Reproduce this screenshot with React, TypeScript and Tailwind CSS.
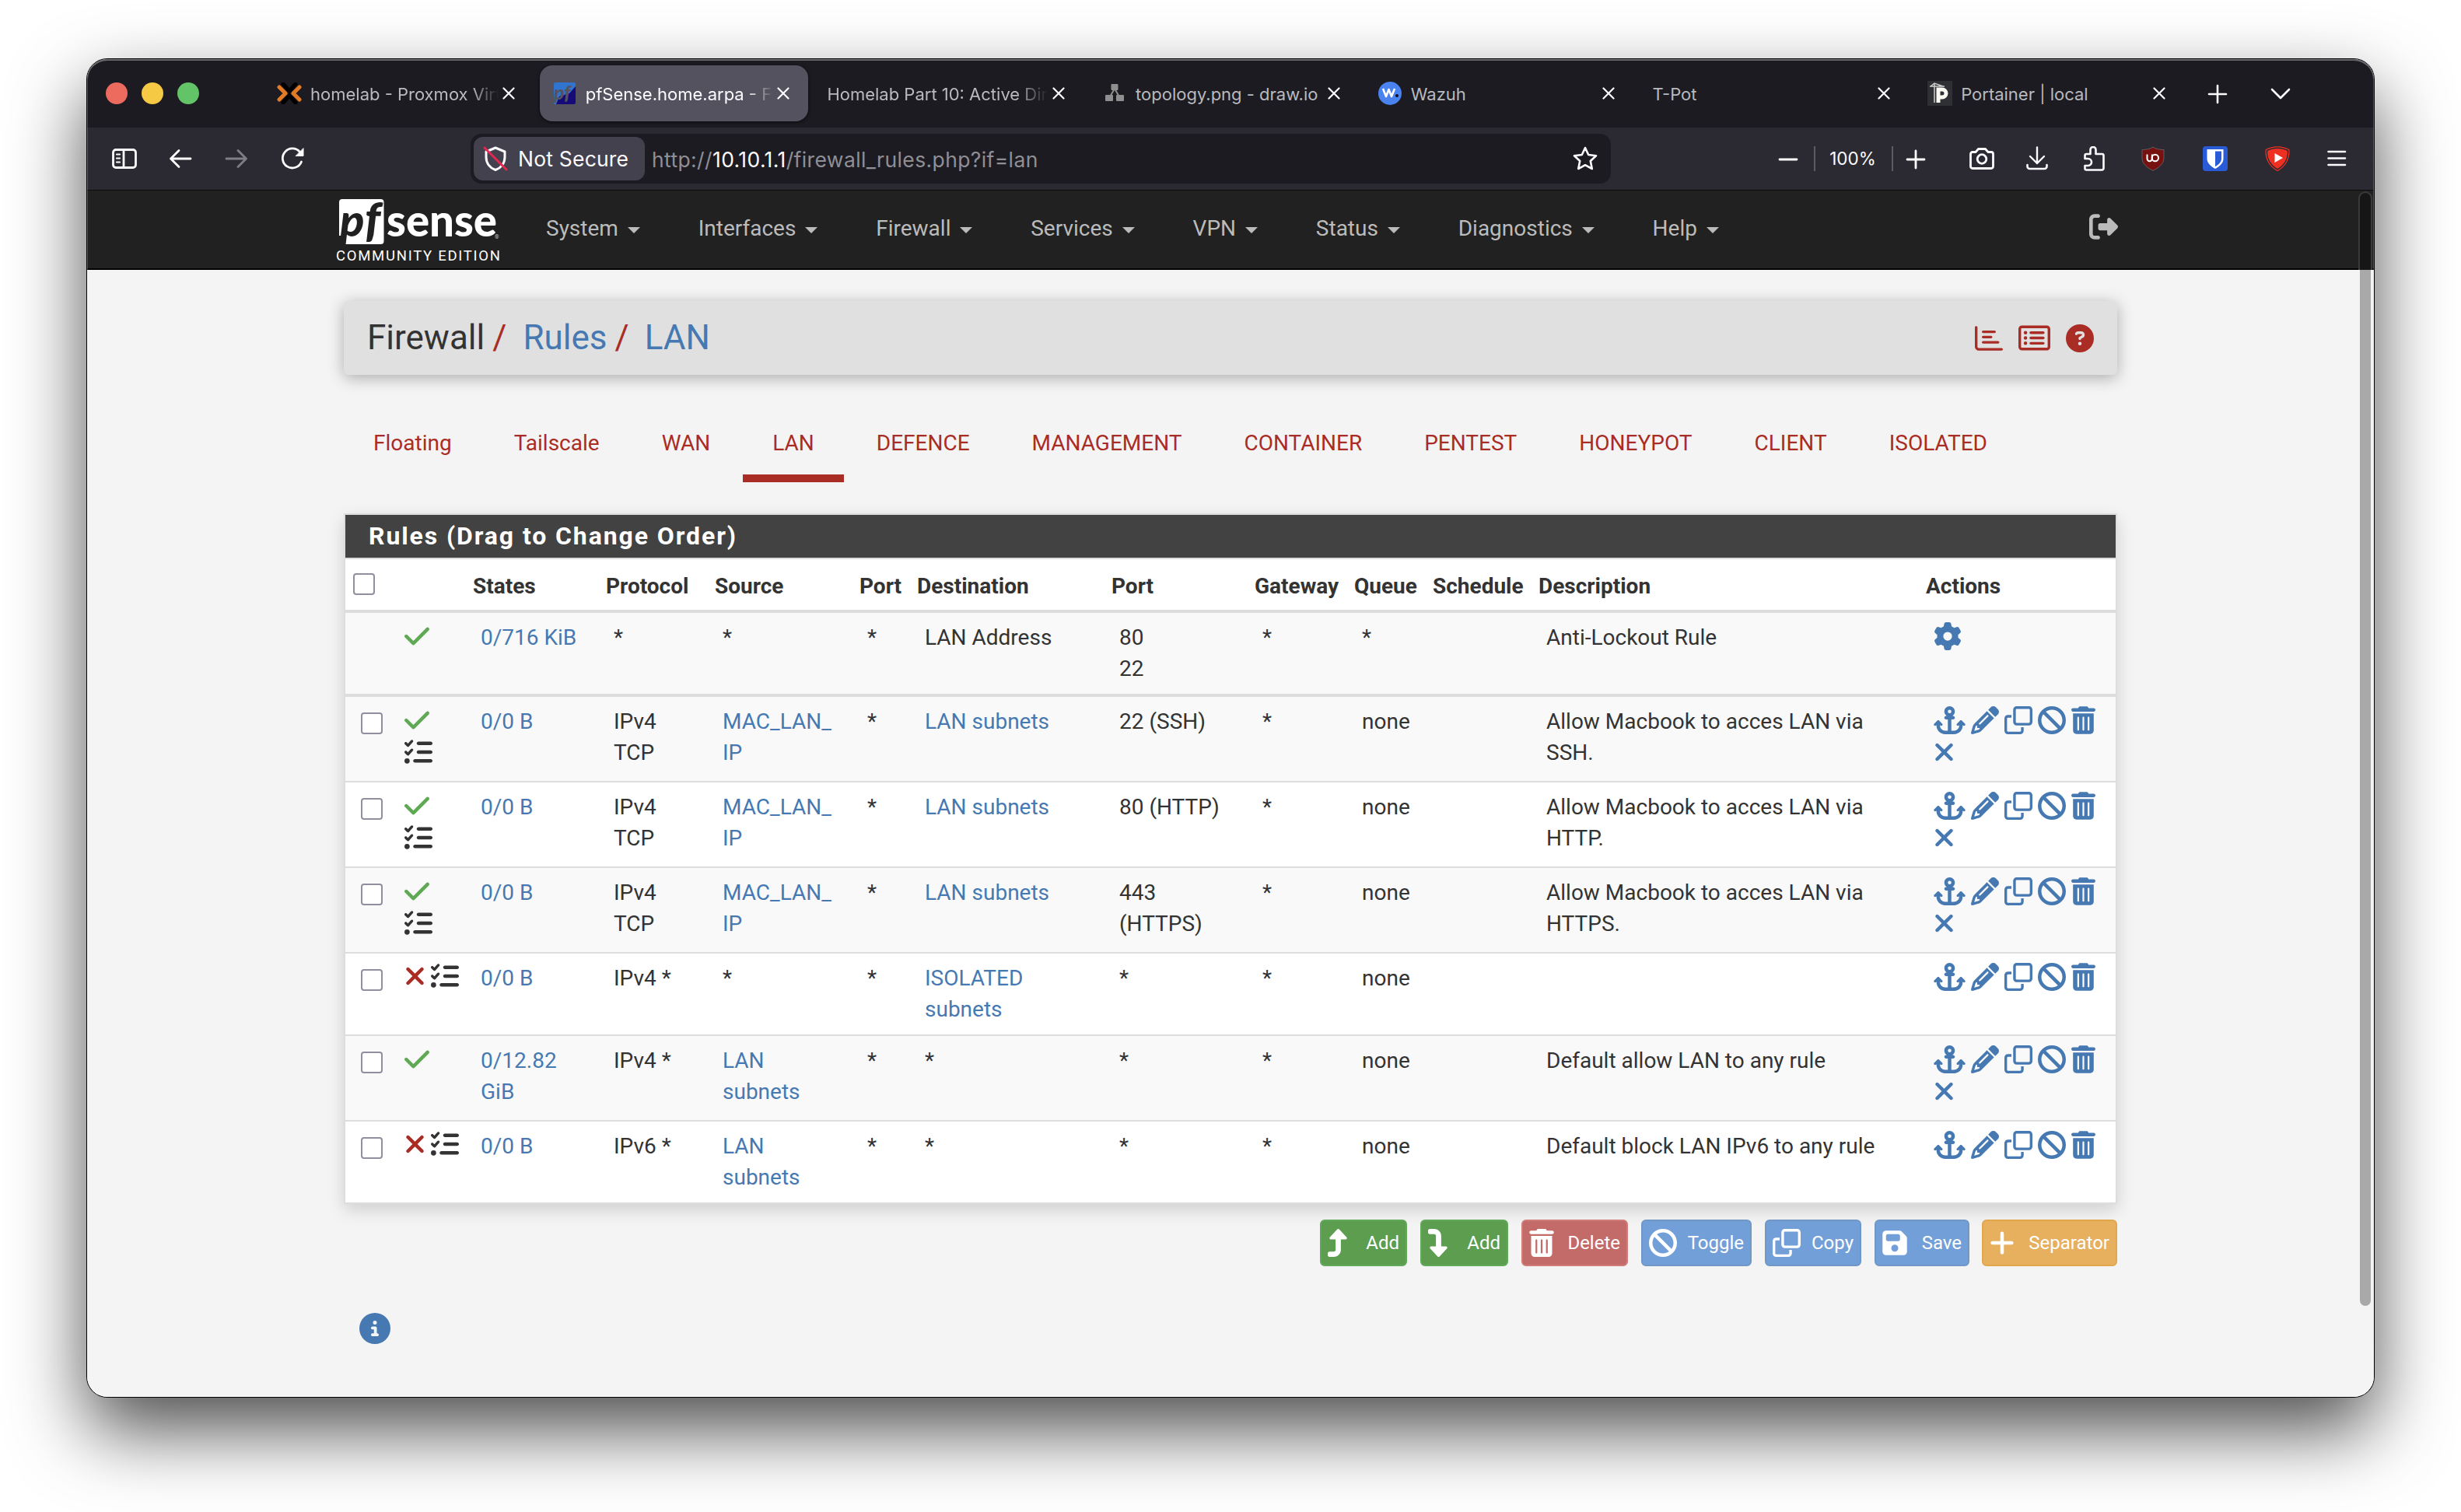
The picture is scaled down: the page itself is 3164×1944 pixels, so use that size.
import React from "react";
import {
  FaAnchor,
  FaBan,
  FaCheck,
  FaCircleInfo,
  FaCircleQuestion,
  FaFloppyDisk,
  FaGear,
  FaListCheck,
  FaPencil,
  FaPlus,
  FaRegChartBar,
  FaRegClone,
  FaRegRectangleList,
  FaRightFromBracket,
  FaTrashCan,
  FaTurnDown,
  FaTurnUp,
  FaXmark,
} from "react-icons/fa6";

/* ---------- Browser chrome ---------- */

interface BrowserTab {
  title: string;
  icon?: React.ReactNode;
  active?: boolean;
  faded?: boolean;
}

const ProxmoxIcon = () => (
  <svg width="32" height="28" viewBox="0 0 32 28">
    <path d="M8 2 L16 11 L24 2 M8 26 L16 17 L24 26" stroke="#000" strokeWidth="5" fill="none" strokeLinecap="round" />
    <path d="M3 6 L11 14 L3 22 M29 6 L21 14 L29 22" stroke="#e57a25" strokeWidth="5" fill="none" strokeLinecap="round" strokeLinejoin="round" />
  </svg>
);

const PfIcon = () => (
  <svg width="32" height="32" viewBox="0 0 32 32">
    <rect x="2" y="2" width="28" height="28" rx="2" fill="#2f74cf" />
    <path d="M30 7 V28 a2 2 0 0 1 -2 2 H5 L9 20 L22 16 Z" fill="#150a78" />
    <text x="2" y="24" fontSize="25" fontWeight="900" fontStyle="italic" fill="#55535e" className="font-['Lato',sans-serif]">
      pf
    </text>
  </svg>
);

const DrawioIcon = () => (
  <svg width="32" height="32" viewBox="0 0 32 32">
    <path d="M16 10 L9 22 M16 10 L23 22" stroke="#8f8f8f" strokeWidth="2" />
    <g fill="#8f8f8f">
      <rect x="11.500" y="4" width="9" height="8" rx="1" />
      <rect x="4" y="18" width="10" height="8" rx="1" />
      <rect x="18" y="18" width="10" height="8" rx="1" />
    </g>
  </svg>
);

const WazuhIcon = () => (
  <svg width="32" height="32" viewBox="0 0 32 32">
    <circle cx="16" cy="16" r="15" fill="#4a83f0" />
    <path d="M7 10 L11 20 L14.500 11 L18 20 L22 10" stroke="#fff" strokeWidth="2.600" fill="none" strokeLinejoin="round" />
    <circle cx="25" cy="19" r="2" fill="#111" />
  </svg>
);

const PortainerIcon = () => (
  <svg width="32" height="32" viewBox="0 0 32 32">
    <rect width="32" height="32" fill="#2e3033" />
    <path d="M3 7 H22 M9 3 V28 M4 7 L9 3 L20 7" stroke="#cfd0cd" strokeWidth="1.500" fill="none" />
    <path d="M14 28 V11 H19 a5 5 0 0 1 0 10 H15" stroke="#fbfbf4" strokeWidth="5" fill="none" />
  </svg>
);

const browserTabs: BrowserTab[] = [
  { title: "homelab - Proxmox Virt", icon: <ProxmoxIcon />, faded: true },
  { title: "pfSense.home.arpa - Fi", icon: <PfIcon />, active: true, faded: true },
  { title: "Homelab Part 10: Active Dir", faded: true },
  { title: "topology.png - draw.io", icon: <DrawioIcon /> },
  { title: "Wazuh", icon: <WazuhIcon /> },
  { title: "T-Pot" },
  { title: "Portainer | local", icon: <PortainerIcon /> },
];

const CloseIcon = () => (
  <svg width="16" height="16" viewBox="0 0 16 16" className="shrink-0" stroke="#fbfbfe" strokeWidth="2.200" strokeLinecap="round">
    <path d="M1.500 1.500 L14.500 14.500 M14.500 1.500 L1.500 14.500" />
  </svg>
);

const TabStrip = () => (
  <div className="flex h-[88px] items-center bg-[#1c1b22]">
    <div className="flex w-[228px] shrink-0 gap-[18px] pl-[24px]">
      <span className="size-[28px] rounded-full bg-[#ed6a5f]" />
      <span className="size-[28px] rounded-full bg-[#f5c943]" />
      <span className="size-[28px] rounded-full bg-[#62c466]" />
    </div>
    <div className="flex gap-2">
      {browserTabs.map((tab) => (
        <div
          key={tab.title}
          className={`flex h-[72px] w-[345.7px] items-center rounded-[16px] pr-[24px] pl-[16px] text-[22px] ${
            tab.active ? "bg-[#54525e] text-[#fbfbfe] shadow-[0_1px_4px_rgba(0,0,0,0.7)]" : "text-[#b9b9be]"
          }`}
        >
          {tab.icon && <span className="mr-[11px] shrink-0">{tab.icon}</span>}
          <span
            className={`min-w-0 flex-1 pt-[2px] whitespace-nowrap ${
              tab.faded ? "[mask-image:linear-gradient(to_right,#000_84%,transparent_98%)]" : ""
            }`}
          >
            {tab.title}
          </span>
          <CloseIcon />
        </div>
      ))}
    </div>
    <svg width="110" height="32" viewBox="0 0 110 32" className="ml-[29px]" fill="none" stroke="#fbfbfe" strokeWidth="2.600" strokeLinecap="round" strokeLinejoin="round">
      <path d="M3 17 H25 M14 6 V28" />
      <path d="M84 11 L95 22 L106 11" />
    </svg>
  </div>
);

const ToolbarIcon: React.FC<{ children: React.ReactNode; className?: string }> = ({ children, className = "" }) => (
  <svg
    width="32"
    height="32"
    viewBox="0 0 32 32"
    className={`shrink-0 ${className}`}
    fill="none"
    stroke="#fbfbfe"
    strokeWidth="2.800"
    strokeLinecap="round"
    strokeLinejoin="round"
  >
    {children}
  </svg>
);

const Toolbar = () => (
  <div className="flex h-[81px] items-center border-b border-[#0c0c0d] bg-[#2b2a33] pl-[32px]">
    <ToolbarIcon>
      <rect x="1.500" y="4.500" width="29" height="23" rx="3.500" />
      <path d="M15 4.500 V27.500" />
      <path d="M6 10.500 H10 M6 15.500 H10 M6 20.500 H10" strokeWidth="2.200" />
    </ToolbarIcon>
    <ToolbarIcon className="ml-[40px]">
      <path d="M29 16 H4 M14 5.500 L3.500 16 L14 26.500" />
    </ToolbarIcon>
    <ToolbarIcon className="ml-[40px] opacity-40">
      <path d="M3 16 H28 M18 5.500 L28.500 16 L18 26.500" />
    </ToolbarIcon>
    <ToolbarIcon className="ml-[40px]">
      <path d="M27.500 20 A12.500 12.500 0 1 1 25.500 7.500" />
      <path d="M30 3 V12.500 H20.500 Z" fill="#fbfbfe" strokeWidth="1" />
    </ToolbarIcon>

    <div className="ml-[213px] flex h-[64px] w-[1466px] items-center rounded-[14px] bg-[#1c1b22] pl-[4px]">
      <div className="flex h-[56px] w-[220px] items-center rounded-[12px] bg-[#42414d] pl-[12px] text-[#fbfbfe]">
        <ToolbarIcon>
          <path d="M16 2 L28 7 V14 C28 22 23 28 16 30.500 C9 28 4 22 4 14 V7 Z" strokeWidth="3" />
          <path d="M2 2 L30 30" stroke="#e22850" strokeWidth="3" />
        </ToolbarIcon>
        <span className="ml-[13px] pt-[1px] text-[26.5px] tracking-[0.2px] whitespace-nowrap">Not Secure</span>
      </div>
      <div className="ml-[9px] flex-1 pt-[3px] text-[26.5px] tracking-[0.38px] whitespace-nowrap text-[#8f8f95]">
        http://<span className="text-[#fbfbfe]">10.10.1.1</span>/firewall_rules.php?if=lan
      </div>
      <ToolbarIcon className="mr-[17px]">
        <path d="M16 2 L20.200 11 L30 12.200 L22.800 19 L24.800 29 L16 24.200 L7.200 29 L9.200 19 L2 12.200 L11.800 11 Z" strokeWidth="2.600" />
      </ToolbarIcon>
    </div>

    <ToolbarIcon className="ml-[212px]">
      <path d="M5 17 H27" />
    </ToolbarIcon>
    <div className="ml-[17px] flex h-[32px] w-[102px] items-center justify-center border-x-2 border-[#5b5b66] pr-[2px] text-[22.5px] text-[#fbfbfe]">
      100%
    </div>
    <ToolbarIcon className="ml-[13px]">
      <path d="M5 17 H27 M16 6 V28" />
    </ToolbarIcon>
    <ToolbarIcon className="ml-[53px]">
      <path d="M4 7.500 H8 L11.500 3.500 H20.500 L24 7.500 H28 a2.500 2.500 0 0 1 2.500 2.500 V26 a2.500 2.500 0 0 1 -2.500 2.500 H4 a2.500 2.500 0 0 1 -2.500 -2.500 V10 A2.500 2.500 0 0 1 4 7.500 Z" />
      <circle cx="16" cy="16.500" r="5.800" />
    </ToolbarIcon>
    <ToolbarIcon className="ml-[39px]">
      <path d="M16 1.500 V22 M7 13 L16 22 L25 13" strokeWidth="2.400" />
      <path d="M3.500 24 V26 a3 3 0 0 0 3 3 H25.500 a3 3 0 0 0 3 -3 V24" strokeWidth="2.600" />
    </ToolbarIcon>
    <ToolbarIcon className="ml-[41px]">
      <path d="M5 16 V12 a2 2 0 0 1 2 -2 H12 V4.500 a3.500 3.500 0 0 1 7 0 V10 H27 a2 2 0 0 1 2 2 V28 a2.500 2.500 0 0 1 -2.500 2.500 H7 a2 2 0 0 1 -2 -2 V25 H9 a4.300 4.300 0 0 0 0 -9 Z" transform="translate(-0.500 0)" strokeWidth="2.600" />
    </ToolbarIcon>
    {/* uBlock Origin */}
    <svg width="30" height="32" viewBox="0 0 30 32" className="ml-[45px] shrink-0">
      <path d="M15 1 C18 3.500 24 4.500 29 4.500 V15 C29 23 22 28 15 31.300 C8 28 1 23 1 15 V4.500 C6 4.500 12 3.500 15 1 Z" fill="#77110f" stroke="#6b6b70" strokeWidth="0.800" />
      <path d="M7.500 10.500 V16 a3.200 3.200 0 0 0 6.400 0 V10.500" fill="none" stroke="#fff" strokeWidth="2" />
      <circle cx="17.800" cy="15" r="4.200" fill="none" stroke="#fff" strokeWidth="2" />
    </svg>
    {/* Bitwarden */}
    <svg width="32" height="32" viewBox="0 0 32 32" className="ml-[49px] shrink-0">
      <rect width="32" height="32" rx="4" fill="#2a5bd7" />
      <path d="M5.500 4 H26.500 V16 C26.500 22 21 26.500 16 29 C11 26.500 5.500 22 5.500 16 Z" fill="#fff" />
      <path d="M16 6.500 H24 V16 C24 20.500 20 24 16 26.200 Z" fill="#2a5bd7" />
    </svg>
    {/* SponsorBlock */}
    <svg width="32" height="32" viewBox="0 0 32 32" className="ml-[48px] shrink-0">
      <path d="M16 0.800 C21 0.800 27 2.500 30.800 4.500 C32 16 26 26 16 31.500 C6 26 0 16 1.200 4.500 C5 2.500 11 0.800 16 0.800 Z" fill="#2b2a33" stroke="#ee3022" strokeWidth="1.200" />
      <path d="M16 3 C20.500 3 25.500 4.300 28.800 6 C29.500 15.500 24.500 24 16 29 C7.500 24 2.500 15.500 3.200 6 C6.500 4.300 11.500 3 16 3 Z" fill="#ee3022" />
      <path d="M12.500 9 L23 15 L12.500 21 Z" fill="#fff" />
    </svg>
    <ToolbarIcon className="ml-[44px]">
      <path d="M5.500 7 H27 M5.500 15.500 H27 M5.500 24 H27" strokeWidth="2.600" />
    </ToolbarIcon>
  </div>
);

/* ---------- pfSense page ---------- */

const menus = ["System", "Interfaces", "Firewall", "Services", "VPN", "Status", "Diagnostics", "Help"];

const Logo = () => (
  <svg width="218" height="100" viewBox="0 -8 218 100" className="shrink-0 overflow-visible">
    <rect x="4" y="3" width="57.500" height="58" rx="4" fill="#fff" />
    <path d="M4 50 H13 L9.500 62 H4 Z" fill="#212121" />
    <g className="font-['Lato',sans-serif]" fontWeight="900">
      <text x="5" y="51" fontSize="58" fontStyle="italic" fill="#212121">
        p
      </text>
      <text x="37" y="51" fontSize="60" fontStyle="italic" fill="#212121">
        f
      </text>
      <text x="65" y="51" fontSize="57" fill="#fff" textLength="142" lengthAdjust="spacingAndGlyphs">
        sense
      </text>
    </g>
    <text x="204" y="54" fontSize="7" fill="#ccc" className="font-['Roboto',sans-serif]">
      ®
    </text>
    <text x="0" y="81.500" fontSize="18.5" fill="#fff" textLength="211" className="font-['Roboto',sans-serif]">
      COMMUNITY EDITION
    </text>
  </svg>
);

const Navbar = () => (
  <nav className="flex h-[102px] items-center border-b-2 border-black bg-[#212121] pr-[329px] pl-[320px] text-[28px] text-[#bbbbbb]">
    <Logo />
    <div className="ml-[52px] flex gap-[74.8px] pb-[3px] leading-[40px]">
      {menus.map((menu) => (
        <span key={menu} className="flex items-center">
          {menu}
          <span className="mt-[4px] ml-[12px] border-x-8 border-t-8 border-x-transparent border-t-[#bbbbbb]" />
        </span>
      ))}
    </div>
    <FaRightFromBracket className="mb-[8px] ml-auto size-[37px]" />
  </nav>
);

const PageHeader = () => (
  <header className="flex h-[95px] items-center rounded-[6px] bg-[#e0e0e0] px-[30px] text-[44px] text-[#333] shadow-[0_4px_20px_rgba(0,0,0,0.3)]">
    <div className="flex pb-[2px]">
      <span>Firewall</span>
      <span className="ml-[10px] text-[#a92c25]">/</span>
      <a className="ml-[21px] text-[#4679b2]">Rules</a>
      <span className="ml-[10px] text-[#a92c25]">/</span>
      <a className="ml-[20px] text-[#4679b2]">LAN</a>
    </div>
    <div className="ml-auto flex items-center gap-[20px] text-[#a92c25]">
      <FaRegChartBar className="size-[36px]" />
      <FaRegRectangleList className="size-[41px]" />
      <FaCircleQuestion className="size-[36px]" />
    </div>
  </header>
);

const interfaces = [
  "Floating",
  "Tailscale",
  "WAN",
  "LAN",
  "DEFENCE",
  "MANAGEMENT",
  "CONTAINER",
  "PENTEST",
  "HONEYPOT",
  "CLIENT",
  "ISOLATED",
];

const InterfaceTabs = () => (
  <ul className="mt-[68px] flex gap-[4px] text-[28px] leading-[40px] text-[#a92c25]">
    {interfaces.map((name) => (
      <li
        key={name}
        className={`border-b-[10px] px-[38px] pb-[20px] ${name === "LAN" ? "border-[#a92c25]" : "border-transparent"}`}
      >
        {name}
      </li>
    ))}
  </ul>
);

interface Rule {
  pass: boolean;
  advanced?: boolean;
  states: string;
  protocol: string;
  source: string;
  destination: string;
  destPort: string;
  description: string;
  killStates?: boolean;
}

const rules: Rule[] = [
  {
    pass: true,
    advanced: true,
    states: "0/0 B",
    protocol: "IPv4\nTCP",
    source: "MAC_LAN_\nIP",
    destination: "LAN subnets",
    destPort: "22 (SSH)",
    description: "Allow Macbook to acces LAN via\nSSH.",
    killStates: true,
  },
  {
    pass: true,
    advanced: true,
    states: "0/0 B",
    protocol: "IPv4\nTCP",
    source: "MAC_LAN_\nIP",
    destination: "LAN subnets",
    destPort: "80 (HTTP)",
    description: "Allow Macbook to acces LAN via\nHTTP.",
    killStates: true,
  },
  {
    pass: true,
    advanced: true,
    states: "0/0 B",
    protocol: "IPv4\nTCP",
    source: "MAC_LAN_\nIP",
    destination: "LAN subnets",
    destPort: "443\n(HTTPS)",
    description: "Allow Macbook to acces LAN via\nHTTPS.",
    killStates: true,
  },
  {
    pass: false,
    advanced: true,
    states: "0/0 B",
    protocol: "IPv4 *",
    source: "*",
    destination: "ISOLATED\nsubnets",
    destPort: "*",
    description: "",
  },
  {
    pass: true,
    states: "0/12.82\nGiB",
    protocol: "IPv4 *",
    source: "LAN\nsubnets",
    destination: "*",
    destPort: "*",
    description: "Default allow LAN to any rule",
    killStates: true,
  },
  {
    pass: false,
    advanced: true,
    states: "0/0 B",
    protocol: "IPv6 *",
    source: "LAN\nsubnets",
    destination: "*",
    destPort: "*",
    description: "Default block LAN IPv6 to any rule",
  },
];

// One column template shared by the heading and every rule row
const columns = "grid grid-cols-[56px_97px_171px_140px_186px_74px_250px_184px_128px_101px_136px_498px_255px]";

const Checkbox = () => <span className="block size-[28px] rounded-[4px] border-2 border-[#8f8f9d] bg-white" />;

const Cell: React.FC<{ value: string; link?: boolean }> = ({ value, link }) => (
  <div className={`pt-[12px] pl-[21px] whitespace-pre ${link && value !== "*" ? "text-[#4679b2]" : ""}`}>{value}</div>
);

const RuleRow: React.FC<{ rule: Rule; index: number }> = ({ rule, index }) => (
  <div
    className={`${columns} ${index > 0 ? "border-t-2 border-[#ddd]" : ""} ${index % 2 ? "bg-white" : "bg-[#f9f9f9]"} ${
      rule.killStates ? (index > 0 ? "h-[110px]" : "h-[108px]") : "h-[106px]"
    }`}
  >
    <div className="pt-[20px] pl-[20px]">
      <Checkbox />
    </div>
    <div className={`flex pt-[12px] pl-[20px] ${rule.pass ? "flex-col" : ""}`}>
      {rule.pass ? (
        <FaCheck className="mt-[-1px] h-[38px] w-[32px] text-[#5fa954]" />
      ) : (
        <FaXmark className="mt-[-1px] mr-[7px] h-[36px] w-[27px] text-[#a92c25]" />
      )}
      {rule.advanced && <FaListCheck className={`size-[36px] ${rule.pass ? "mt-[4px]" : "mt-[-1px]"}`} />}
    </div>
    <Cell value={rule.states} link />
    <Cell value={rule.protocol} />
    <Cell value={rule.source} link />
    <Cell value="*" />
    <Cell value={rule.destination} link />
    <Cell value={rule.destPort} />
    <Cell value="*" />
    <Cell value="none" />
    <div />
    <Cell value={rule.description} />
    <div className="pt-[12px] pl-[21px] text-[#4679b2]">
      <div className="flex gap-[7px]">
        <FaAnchor className="h-[36px] w-[41px]" />
        <FaPencil className="size-[36px]" />
        <FaRegClone className="size-[36px]" />
        <FaBan className="size-[36px]" />
        <FaTrashCan className="h-[36px] w-[31px]" />
      </div>
      {rule.killStates && <FaXmark className="mt-[5px] h-[36px] w-[27px]" />}
    </div>
  </div>
);

const headings = [
  "",
  "States",
  "Protocol",
  "Source",
  "Port",
  "Destination",
  "Port",
  "Gateway",
  "Queue",
  "Schedule",
  "Description",
  "Actions",
];

const RulesPanel = () => (
  <section className="mt-[40px] border-2 border-[#ddd] bg-white text-[28px] leading-[40px] text-[#333] shadow-[0_8px_20px_rgba(0,0,0,0.15)]">
    <h2 className="h-[57px] border-b-2 border-[#ddd] bg-[#424242] pl-[30px] text-[32px] leading-[55px] font-bold tracking-[1.9px] text-white">
      Rules (Drag to Change Order)
    </h2>
    <div className={`${columns} h-[69px] border-b-4 border-[#ddd] font-bold`}>
      <div className="pt-[18px] pl-[10px]">
        <Checkbox />
      </div>
      {headings.map((heading, i) => (
        <div key={i} className="pt-[15px] pl-[11px]">
          {heading}
        </div>
      ))}
    </div>
    <div className={`${columns} h-[108px] border-b-4 border-[#ddd] bg-[#f9f9f9]`}>
      <div />
      <div className="pt-[11px] pl-[20px]">
        <FaCheck className="h-[38px] w-[32px] text-[#5fa954]" />
      </div>
      <Cell value="0/716 KiB" link />
      <Cell value="*" />
      <Cell value="*" />
      <Cell value="*" />
      <Cell value="LAN Address" />
      <Cell value={"80\n22"} />
      <Cell value="*" />
      <Cell value="*" />
      <div />
      <Cell value="Anti-Lockout Rule" />
      <div className="pt-[12px] pl-[21px] text-[#4679b2]">
        <FaGear className="size-[36px]" />
      </div>
    </div>
    {rules.map((rule, index) => (
      <RuleRow key={index} rule={rule} index={index} />
    ))}
  </section>
);

const buttons = [
  { label: "Add", icon: <FaTurnUp className="h-[36px] w-[27px]" />, className: "w-[112px] bg-[#5c9d50] border-[#62a85a]" },
  { label: "Add", icon: <FaTurnDown className="h-[36px] w-[27px]" />, className: "w-[113px] bg-[#5c9d50] border-[#62a85a]" },
  { label: "Delete", icon: <FaTrashCan className="h-[36px] w-[32px]" />, className: "w-[137px] bg-[#c26b69] border-[#d07c79]" },
  { label: "Toggle", icon: <FaBan className="size-[36px]" />, className: "w-[142px] bg-[#739fd9] border-[#7097c5]" },
  { label: "Copy", icon: <FaRegClone className="size-[36px]" />, className: "w-[124px] bg-[#739fd9] border-[#7097c5]" },
  { label: "Save", icon: <FaFloppyDisk className="h-[36px] w-[32px]" />, className: "w-[122px] bg-[#739fd9] border-[#7097c5] mr-[-1px]" },
  { label: "Separator", icon: <FaPlus className="h-[36px] w-[32px]" />, className: "w-[174px] bg-[#e6b05f] border-[#e2a64c]" },
];

const ActionBar = () => (
  <div className="mt-[20px] flex justify-end gap-[17px] text-[24px] text-white">
    {buttons.map((button, i) => (
      <button
        key={i}
        className={`flex h-[60px] items-center justify-between rounded-[6px] border-2 pr-[8px] pl-[8px] ${button.className}`}
      >
        {button.icon}
        {button.label}
      </button>
    ))}
  </div>
);

const App = () => {
  return (
    <div className="h-[1944px] w-[3164px] overflow-hidden bg-white pt-[76px] pl-[112px] font-['Roboto',sans-serif]">
      <div className="w-[2940px] rounded-[26px] shadow-[0_0_0_1px_#000,0_42px_96px_rgba(0,0,0,0.7)]">
        <div className="relative flex h-[1720px] flex-col overflow-hidden rounded-[26px] bg-[#f4f4f4]">
          <div className="font-['Inter',sans-serif]">
            <TabStrip />
            <Toolbar />
          </div>
          <Navbar />
          <main className="px-[330px] pt-[40px]">
            <PageHeader />
            <InterfaceTabs />
            <RulesPanel />
            <ActionBar />
            <FaCircleInfo className="mt-[60px] ml-[20px] size-[40px] text-[#4679b2]" />
          </main>
          {/* Overlay scrollbar and the window's inner highlight */}
          <div className="absolute top-[170px] right-[2px] h-[101px] w-[18px] rounded-t-[9px] border-2 border-b-0 border-[#3a3a3a] bg-[#161616]" />
          <div className="absolute top-[271px] right-[4px] h-[1332px] w-[14px] rounded-b-[7px] bg-[#a9a9a9]" />
          <div className="absolute inset-0 rounded-[26px] shadow-[inset_0_2px_0_#6a6a6c,inset_0_0_0_1px_rgba(255,255,255,0.25)]" />
        </div>
      </div>
    </div>
  );
};

export default App;
